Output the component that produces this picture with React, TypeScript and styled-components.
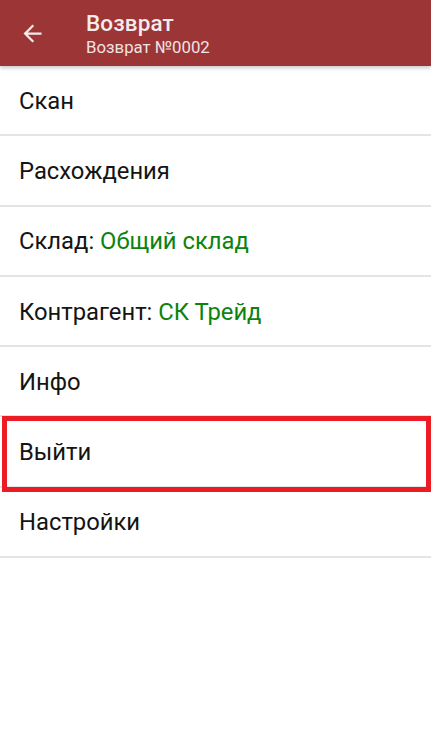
import React from "react";
import styled, { createGlobalStyle } from "styled-components";

const Global = createGlobalStyle`
  html, body { margin: 0; padding: 0; background: #ffffff; }
  body { font-family: Roboto, "Noto Sans", "Liberation Sans", sans-serif; }
  * { box-sizing: border-box; }
`;

const Page = styled.div`
  width: 431px;
  min-height: 739px;
  background: #ffffff;
  display: flex;
  flex-direction: column;
`;

const AppBar = styled.header`
  height: 66px;
  background: #9c3536;
  display: flex;
  align-items: center;
  box-shadow: 0 2px 4px rgba(0, 0, 0, 0.22);
  position: relative;
  z-index: 1;
`;

const BackButton = styled.div`
  width: 86px;
  height: 66px;
  display: flex;
  align-items: center;
  padding-left: 19px;
  color: #f3eaea;
`;

const Titles = styled.div`
  display: flex;
  flex-direction: column;
  padding-top: 2px;
`;

const Title = styled.div`
  color: #f4ecec;
  font-size: 22.5px;
  font-weight: 500;
  line-height: 26px;
  letter-spacing: 0.1px;
`;

const Subtitle = styled.div`
  color: #efe2e2;
  font-size: 16.8px;
  font-weight: 400;
  line-height: 22px;
`;

const Menu = styled.div`
  display: flex;
  flex-direction: column;
`;

const Row = styled.div`
  position: relative;
  height: 70.3px;
  display: flex;
  align-items: center;
  padding-left: 19px;
  padding-top: 1px;
  border-bottom: 2px solid #e4e4e4;
  font-size: 23.8px;
  color: #141414;
`;

const Value = styled.span`
  color: #0b830e;
`;

const Highlight = styled.div`
  position: absolute;
  top: -1px;
  left: 2px;
  right: 0;
  bottom: -6px;
  border: 5px solid #ec1c24;
  pointer-events: none;
`;

const ArrowIcon = () => (
  <svg width="27" height="27" viewBox="0 0 24 24" fill="currentColor">
    <path d="M20 11H7.83l5.59-5.59L12 4l-8 8 8 8 1.41-1.41L7.83 13H20v-2z" />
  </svg>
);

const items: { label: string; value?: string; highlight?: boolean }[] = [
  { label: "Скан" },
  { label: "Расхождения" },
  { label: "Склад: ", value: "Общий склад" },
  { label: "Контрагент: ", value: "СК Трейд" },
  { label: "Инфо" },
  { label: "Выйти", highlight: true },
  { label: "Настройки" },
];

export default function App() {
  return (
    <>
      <Global />
      <Page>
        <AppBar>
          <BackButton>
            <ArrowIcon />
          </BackButton>
          <Titles>
            <Title>Возврат</Title>
            <Subtitle>Возврат №0002</Subtitle>
          </Titles>
        </AppBar>
        <Menu>
          {items.map((it) => (
            <Row key={it.label}>
              <span>
                {it.label}
                {it.value && <Value>{it.value}</Value>}
              </span>
              {it.highlight && <Highlight />}
            </Row>
          ))}
        </Menu>
      </Page>
    </>
  );
}
